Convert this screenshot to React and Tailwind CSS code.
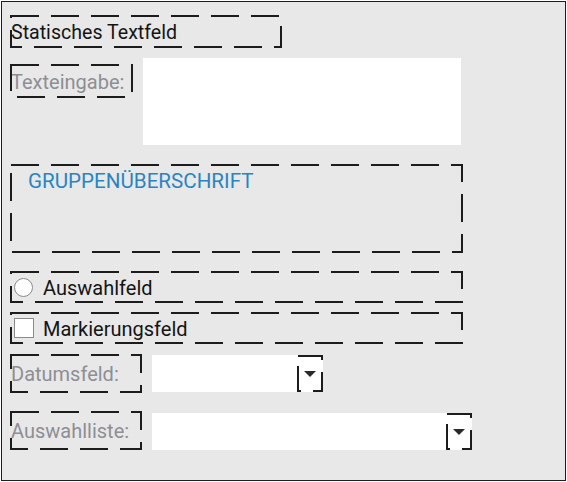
import React from 'react';

// Dashed outline drawn as an overlay, the way the dialog editor marks a control
function Dashed({ className = '', children }) {
  return (
    <div className={`relative ${className}`}>
      <svg className="pointer-events-none absolute left-px top-px h-[calc(100%-2px)] w-[calc(100%-2px)] overflow-visible">
        <rect x="0" y="0" width="100%" height="100%" fill="none" stroke="#1c1c1c" strokeWidth="2" strokeDasharray="28 12" />
      </svg>
      {children}
    </div>
  );
}

function DropButton() {
  return (
    <Dashed className="ml-auto flex h-full w-[26px] items-center justify-center">
      <svg width="12" height="6" viewBox="0 0 12 6">
        <polygon points="0,0 12,0 6,6" fill="#2a2a2a" />
      </svg>
    </Dashed>
  );
}

export default function App() {
  return (
    <div className="bg-white" style={{ fontFamily: 'Roboto, "Liberation Sans", sans-serif' }}>
      <div className="ml-px mt-px flex h-[480px] w-[565px] flex-col border border-[#1e1e1e] bg-[#e8e8e8] pl-[8px] text-[20px] leading-none">
        {/* static text */}
        <Dashed className="mt-[13px] flex h-[33px] w-[272px] items-center pl-[1px] pt-[2px] text-[19.6px] text-[#141414]">
          Statisches Textfeld
        </Dashed>

        {/* text input */}
        <div className="mt-[10px] flex items-start">
          <Dashed className="mt-[6px] flex h-[34px] w-[123px] items-center pl-[1px] pt-[2px] text-[#8e8e94]">
            Texteingabe:
          </Dashed>
          <div className="ml-[10px] h-[87px] w-[318px] bg-white" />
        </div>

        {/* group box */}
        <Dashed className="mt-[19px] h-[89px] w-[453px] pl-[18px] pt-[7px]">
          <span className="text-[20.6px] text-[#2a84c3]">GRUPPENÜBERSCHRIFT</span>
        </Dashed>

        {/* radio button */}
        <Dashed className="mt-[18px] flex h-[32px] w-[453px] items-center pl-[4px] text-[#141414]">
          <span className="h-[19px] w-[19px] rounded-full border border-[#8a8a8a] bg-white" />
          <span className="ml-[10px] pt-[1px]">Auswahlfeld</span>
        </Dashed>

        {/* check box */}
        <Dashed className="mt-[9px] flex h-[32px] w-[453px] items-center pl-[4px] text-[#141414]">
          <span className="h-[20px] w-[20px] border border-[#8a8a8a] bg-white" />
          <span className="ml-[9px] pt-[1px]">Markierungsfeld</span>
        </Dashed>

        {/* date field */}
        <div className="mt-[10px] flex items-start">
          <Dashed className="flex h-[39px] w-[132px] items-center pl-[1px] pt-[1px] text-[#8e8e94]">
            Datumsfeld:
          </Dashed>
          <div className="ml-[10px] mt-[1px] flex h-[37px] w-[171px] bg-white">
            <DropButton />
          </div>
        </div>

        {/* list box */}
        <div className="mt-[18px] flex items-start">
          <Dashed className="flex h-[39px] w-[132px] items-center pl-[1px] pt-[1px] text-[#8e8e94]">
            Auswahlliste:
          </Dashed>
          <div className="ml-[10px] mt-[2px] flex h-[37px] w-[320px] bg-white">
            <DropButton />
          </div>
        </div>
      </div>
    </div>
  );
}
